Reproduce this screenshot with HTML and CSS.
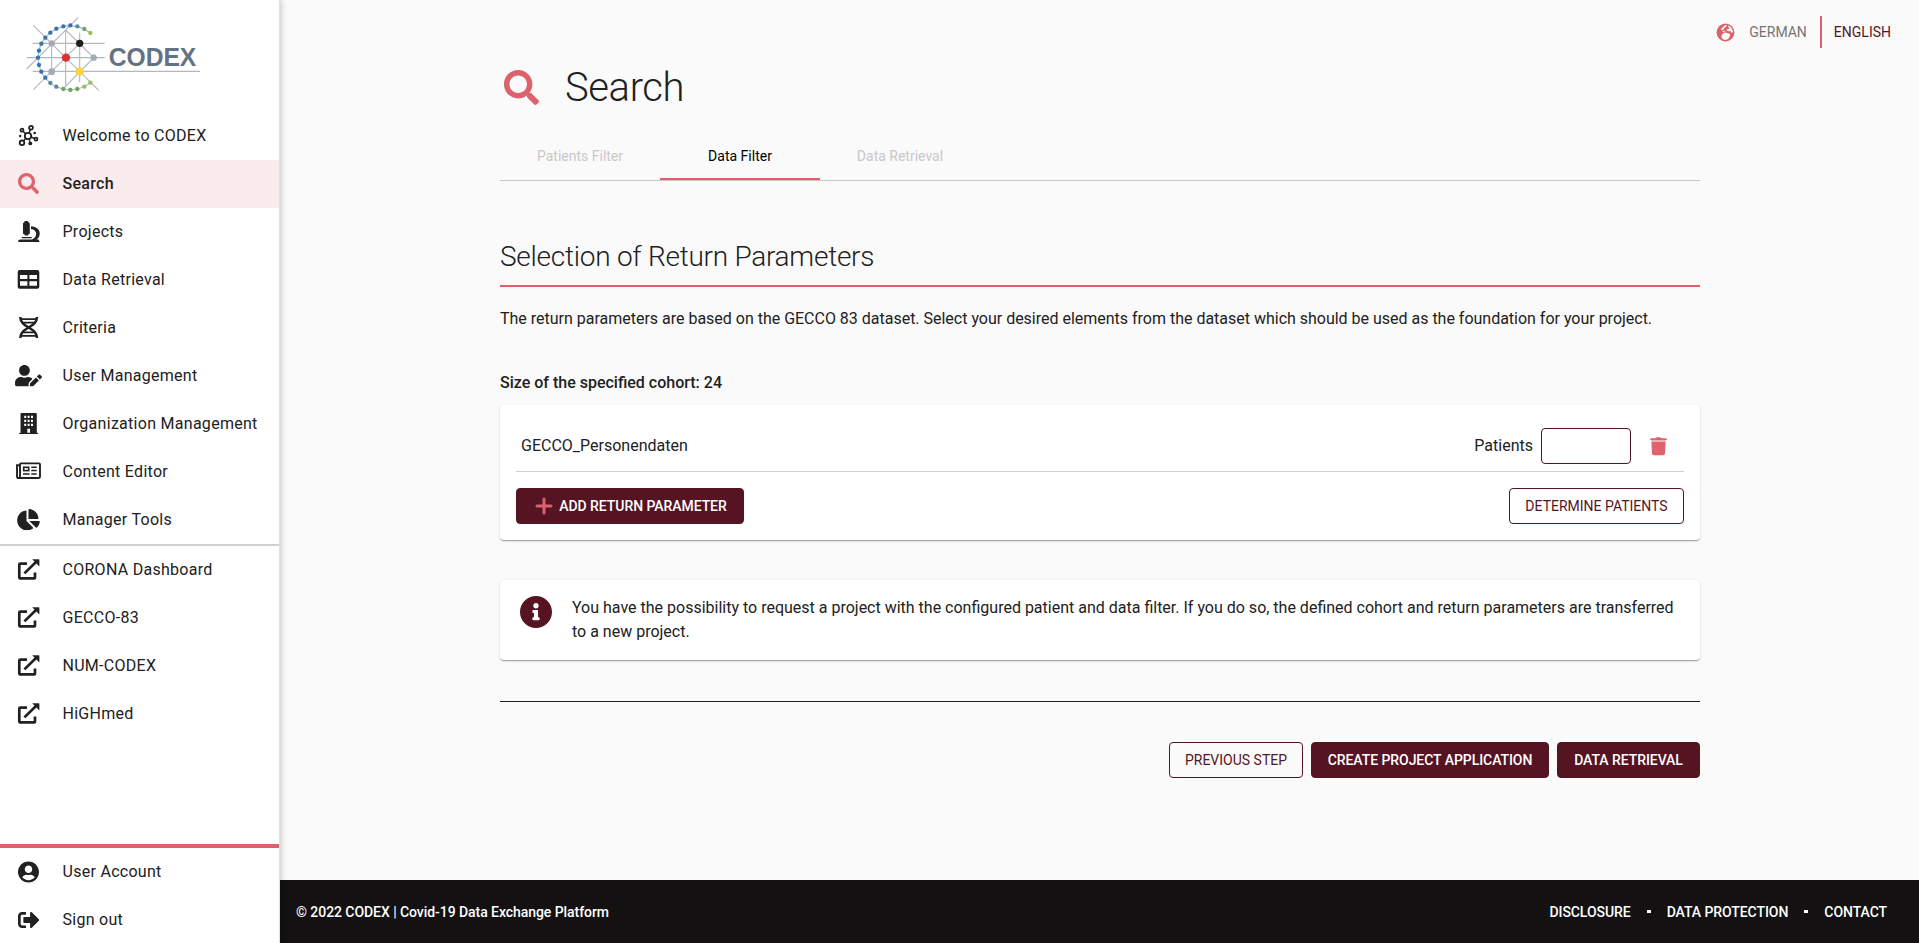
FILE: index.html
```html
<!DOCTYPE html>
<html lang="en">
<head>
<meta charset="utf-8">
<title>CODEX – Search</title>
<link rel="stylesheet" href="styles.css">
</head>
<body>
<svg class="symbols" aria-hidden="true">
  <symbol id="search" viewBox="0 0 512 512"><path d="M505 442.7L405.3 343c-4.5-4.5-10.6-7-17-7H372c27.6-35.3 44-79.7 44-128C416 93.1 322.9 0 208 0S0 93.1 0 208s93.1 208 208 208c48.3 0 92.7-16.4 128-44v16.3c0 6.4 2.5 12.5 7 17l99.7 99.7c9.4 9.4 24.6 9.4 33.9 0l28.3-28.3c9.4-9.4 9.4-24.6.1-34zM208 336c-70.7 0-128-57.2-128-128 0-70.7 57.2-128 128-128 70.7 0 128 57.2 128 128 0 70.7-57.2 128-128 128z"/></symbol>
  <symbol id="external" viewBox="0 0 28 24"><path d="M13 5.6H6.2Q5.3 5.6 5.3 6.5V19.4Q5.3 20.4 6.2 20.4H20.1Q21 20.4 21 19.4V14.6M10.4 15.4L22 4" fill="none" stroke="currentColor" stroke-width="2.7"/><path d="M18.2 1.2h6.4q.8 0 .8.8v6.4z"/></symbol>
</svg>
<div class="app">
  <aside class="sidebar">
    <svg class="logo" viewBox="0 0 840 336">
      <g stroke="#b3b8bf" stroke-width="3.4" fill="none">
        <path d="M100 76L296 271M235 52L80 207M98 130H314M80 173H314M98 214H600M155 130V214M197 90V262M239 98V246M239 130L100 269M155 214L239 130M239 130L281 173L190 266M197 90L281 173"/>
        <path d="M271 99A96 96 0 1 0 271 248" stroke="#9fbfd0"/>
      </g>
      <g fill="#3873ae"><circle cx="211" cy="76" r="6.5"/><circle cx="190" cy="79" r="6.5"/><circle cx="169" cy="86" r="6.5"/><circle cx="151" cy="98" r="6.5"/><circle cx="136" cy="113" r="6.5"/><circle cx="124" cy="131" r="6.5"/><circle cx="117" cy="152" r="6.5"/><circle cx="114" cy="173" r="6.5"/><circle cx="117" cy="195" r="6.5"/><circle cx="124" cy="215" r="6.5"/><circle cx="136" cy="233" r="6.5"/></g>
      <g fill="#598b99"><circle cx="232" cy="79" r="6.5"/><circle cx="151" cy="249" r="6.5"/><circle cx="169" cy="260" r="6.5"/></g>
      <g fill="#76a15e"><circle cx="253" cy="87" r="6.5"/><circle cx="190" cy="267" r="6.5"/><circle cx="211" cy="270" r="6.5"/><circle cx="232" cy="267" r="6.5"/></g>
      <g fill="#9cbf51"><circle cx="271" cy="99" r="6.5"/><circle cx="253" cy="260" r="6.5"/><circle cx="271" cy="248" r="6.5"/></g>
      <g fill="#a2acb6"><circle cx="155" cy="130" r="9.5"/><circle cx="281" cy="173" r="9.5"/><circle cx="155" cy="215" r="10"/></g>
      <circle cx="239" cy="130" r="11" fill="#1d1d1b"/><circle cx="198" cy="173" r="12.5" fill="#d9342f"/><circle cx="239" cy="215" r="12.5" fill="#fbd43b"/>
      <text class="logo-text" x="326" y="198" textLength="263" lengthAdjust="spacingAndGlyphs">CODEX</text>
    </svg>
    <nav class="nav">
      <a class="item"><svg class="icon" viewBox="0 0 28 24"><g fill="none" stroke="currentColor" stroke-width="1.8"><circle cx="14" cy="12" r="3.2"/><circle cx="8" cy="6.2" r="1.5"/><circle cx="17" cy="3.8" r="1.9"/><circle cx="22" cy="15.2" r="1.5"/><circle cx="8" cy="18.8" r="2.3"/><path d="M9 7.2l2.7 2.6M16.3 5.6l-1.2 3.3M17 13l3.6 1.5M11.6 14.3l-2 2.7M15.1 15.1l.8 2.5" stroke-width="1.4"/></g><circle cx="20.7" cy="9" r="1.3"/><circle cx="16.3" cy="19.4" r="1.9"/><circle cx="6.2" cy="12" r="1.2"/></svg>Welcome to CODEX</a>
      <a class="item active"><svg class="icon"><use href="#search" x="4" y="1" width="21" height="21"/></svg>Search</a>
      <a class="item"><svg class="icon" viewBox="0 0 28 24"><path d="M10.2 2.4Q10.2 1 11.5 1h1.7q1.3 0 1.3 1.4 1.3 0 1.3 1.3v9.2q0 1.3-1.3 1.3l-.6 1.3h-3l-.6-1.3q-1.3 0-1.3-1.3V3.7q0-1.3 1.2-1.3zM7.700 17h10v1.300h-10zM17 6.200c10.500.6 10.600 10.500 5.500 13.200h2q.9 1.300.9 2.600H4q0-2.600 2-2.600h12c6-1.900 5.500-10-1-10.300z"/></svg>Projects</a>
      <a class="item"><svg class="icon" viewBox="0 0 28 24"><path fill-rule="evenodd" d="M5.700 2h17.600q2 0 2 2v14.700q0 2-2 2H5.700q-2 0-2-2V4q0-2 2-2zM6 7v4h7.400V7zM15.400 7v4h7.600V7zM6 13.200v4.600h7.400v-4.600zM15.400 13.200v4.600h7.600v-4.600z"/></svg>Data Retrieval</a>
      <a class="item"><svg class="icon" viewBox="0 0 28 24"><g fill="none" stroke="currentColor"><path d="M6.300 1c0 11 16.700 10 16.700 21M23 1c0 11-16.700 10-16.700 21" stroke-width="2.500"/><path d="M7 3.200h15M9 6.600h11M9 16.400h11M7 19.800h15" stroke-width="1.700"/></g></svg>Criteria</a>
      <a class="item"><svg class="icon"><svg x="1" y="1" width="27" height="21.500" viewBox="0 0 640 512"><path d="M224 256c70.700 0 128-57.300 128-128S294.700 0 224 0 96 57.300 96 128s57.300 128 128 128zm89.600 32h-16.700c-22.200 10.200-46.900 16-72.900 16s-50.600-5.800-72.900-16h-16.700C60.200 288 0 348.200 0 422.400V464c0 26.500 21.500 48 48 48h274.900c-2.400-6.800-3.400-14-2.600-21.300l6.800-60.900 1.200-11.100 7.900-7.900 77.300-77.300c-24.500-27.700-60-45.500-99.900-45.500zm45.300 145.300l-6.800 61c-1.100 10.200 7.500 18.800 17.600 17.600l60.900-6.800 137.900-137.900-71.700-71.700-137.900 137.800zM633 268.900L595.100 231c-9.300-9.300-24.500-9.300-33.800 0l-37.800 37.800-4.100 4.100 71.800 71.700 41.800-41.800c9.300-9.400 9.300-24.500 0-33.900z"/></svg></svg>User Management</a>
      <a class="item"><svg class="icon" viewBox="0 0 28 24"><path fill-rule="evenodd" d="M7.500 1h14.300q1 0 1 1v18.800q1.500 0 1.500 1.200H5q0-1.200 1.500-1.200V2q0-1 1-1zM10.200 3.700v2.200h2V3.700zM13.600 3.700v2.200h2V3.700zM17 3.700v2.200h2V3.700zM10.200 7.700v2.200h2V7.700zM13.600 7.700v2.200h2V7.700zM17 7.700v2.200h2V7.700zM10.200 11.700v2.200h2v-2.200zM13.600 11.700v2.200h2v-2.200zM17 11.700v2.200h2v-2.200zM13.300 16.800v4h2.700v-4z"/></svg>Organization Management</a>
      <a class="item"><svg class="icon" viewBox="0 0 28 24"><g fill="none" stroke="currentColor" stroke-width="1.900"><path d="M6 4.400q0-1 1-1h18q1 0 1 1v12.400q0 1.200-1.200 1.200H4.600Q3 18 3 16.400V5.200h2.500M6 4v12.500Q6 18 4.500 18"/><rect x="9.700" y="7.300" width="5" height="3.300" stroke-width="1.600"/><path d="M17.300 7.300h5.400M17.300 10.500h5.400M9 14h6.600M17.300 14h5.400" stroke-width="1.600"/></g></svg>Content Editor</a>
      <a class="item"><svg class="icon"><svg x="3" y="1" width="23" height="21.300" viewBox="0 0 544 512"><path d="M527.790 288H290.500l158.030 158.030c6.040 6.040 15.980 6.530 22.190.68 38.700-36.460 65.320-85.610 73.130-140.860 1.340-9.460-6.510-17.850-16.060-17.850zm-15.830-64.800C503.720 103.740 408.260 8.280 288.800.04 279.680-.59 272 7.100 272 16.240V240h223.770c9.140 0 16.820-7.680 16.190-16.800zM224 288V50.710c0-9.550-8.390-17.400-17.840-16.060C86.990 51.490-4.100 155.600.14 280.370 4.500 408.510 114.830 513.590 243.030 511.980c50.400-.63 96.970-16.870 135.260-44.030 7.900-5.600 8.420-17.230 1.570-24.080L224 288z"/></svg></svg>Manager Tools</a>
      <div class="rule"></div>
      <a class="item"><svg class="icon"><use href="#external"/></svg>CORONA Dashboard</a>
      <a class="item"><svg class="icon"><use href="#external"/></svg>GECCO-83</a>
      <a class="item"><svg class="icon"><use href="#external"/></svg>NUM-CODEX</a>
      <a class="item"><svg class="icon"><use href="#external"/></svg>HiGHmed</a>
    </nav>
    <nav class="nav account">
      <a class="item"><svg class="icon"><svg x="4" y="1" width="21" height="22" viewBox="0 0 496 512"><path d="M248 8C111 8 0 119 0 256s111 248 248 248 248-111 248-248S385 8 248 8zm0 96c48.600 0 88 39.400 88 88s-39.400 88-88 88-88-39.400-88-88 39.400-88 88-88zm0 344c-58.700 0-111.300-26.600-146.500-68.200 18.800-35.400 55.600-59.800 98.500-59.800 2.400 0 4.800.4 7.100 1.100 13 4.200 26.600 6.900 40.900 6.900 14.300 0 28-2.700 40.900-6.900 2.300-.7 4.700-1.100 7.100-1.100 42.900 0 79.700 24.400 98.500 59.800C359.300 421.400 306.700 448 248 448z"/></svg></svg>User Account</a>
      <a class="item"><svg class="icon"><svg x="4" y="1" width="21.500" height="22" viewBox="0 0 512 512"><path d="M497 273L329 441c-15 15-41 4.500-41-17v-96H152c-13.300 0-24-10.700-24-24v-96c0-13.300 10.700-24 24-24h136V88c0-21.400 25.900-32 41-17l168 168c9.300 9.400 9.300 24.600 0 34zM192 436v-40c0-6.600-5.400-12-12-12H96c-17.700 0-32-14.300-32-32V160c0-17.700 14.300-32 32-32h84c6.600 0 12-5.400 12-12V76c0-6.600-5.400-12-12-12H96c-53 0-96 43-96 96v192c0 53 43 96 96 96h84c6.600 0 12-5.400 12-12z"/></svg></svg>Sign out</a>
    </nav>
  </aside>
  <div class="page">
    <header class="languages">
      <svg class="globe" viewBox="0 0 20 20"><circle cx="10" cy="10" r="9.400"/><path class="land" d="M6 13l2.500-3 2.500.2 2 .8 1.800.2-.3 3-1.700 2.600-2.800 1-2.800-.7L5.800 15zM9.500 2.300l2-.3-.8 2-2 1-.4 1.700-2.300.8-.8-1 2-2zM12.800 2.500l2.700 1.800 1.800 2.800.6 3-1.700-.2-1.200-1.600-2 .4-2-1.200 1-1.300 1.700.2.5-1.400-1.600-1zM6.500 8.800l3-1 .5.8-2.500 1z"/></svg>
      <a class="lang">GERMAN</a><a class="lang current">ENGLISH</a>
    </header>
    <main class="content">
      <div class="title"><svg class="title-icon"><use href="#search"/></svg><h1>Search</h1></div>
      <div class="tabs"><a class="tab">Patients Filter</a><a class="tab selected">Data Filter</a><a class="tab">Data Retrieval</a></div>
      <h2>Selection of Return Parameters</h2>
      <p class="intro">The return parameters are based on the GECCO 83 dataset. Select your desired elements from the dataset which should be used as the foundation for your project.</p>
      <p class="cohort">Size of the specified cohort: 24</p>
      <section class="card parameters">
        <div class="parameter"><span class="name">GECCO_Personendaten</span><label for="patients">Patients</label><input id="patients" class="count"><svg class="trash" viewBox="0 0 18 19"><path d="M1.400 5h14.200L15 16.500q-.1 1.800-2 1.800H4q-1.900 0-2-1.800zM1 1.300h4.500L6.600.3h3.800l1.100 1H16q.8 0 .8.700v1H.2V2q0-.7.800-.7z"/><path d="M1.200 3h14.600l-.2 2H1.400z" opacity=".5"/></svg></div>
        <div class="actions"><button class="button filled add"><svg class="plus" viewBox="0 0 18 18"><path d="M9 2v14M2 9h14" stroke="currentColor" stroke-width="3" stroke-linecap="round"/></svg>ADD RETURN PARAMETER</button><button class="button determine">DETERMINE PATIENTS</button></div>
      </section>
      <section class="card info"><svg class="info-icon" viewBox="8 8 496 496"><path d="M256 8C119.043 8 8 119.083 8 256c0 136.997 111.043 248 248 248s248-111.003 248-248C504 119.083 392.957 8 256 8zm0 110c23.196 0 42 18.804 42 42s-18.804 42-42 42-42-18.804-42-42 18.804-42 42-42zm56 254c0 6.627-5.373 12-12 12h-88c-6.627 0-12-5.373-12-12v-24c0-6.627 5.373-12 12-12h12v-64h-12c-6.627 0-12-5.373-12-12v-24c0-6.627 5.373-12 12-12h64c6.627 0 12 5.373 12 12v100h12c6.627 0 12 5.373 12 12v24z"/></svg><p>You have the possibility to request a project with the configured patient and data filter. If you do so, the defined cohort and return parameters are transferred to a new project.</p></section>
      <div class="steps"><button class="button previous">PREVIOUS STEP</button><button class="button filled create">CREATE PROJECT APPLICATION</button><button class="button filled retrieval">DATA RETRIEVAL</button></div>
    </main>
    <footer class="footer"><span>© 2022 CODEX | Covid-19 Data Exchange Platform</span><div class="links"><a>DISCLOSURE</a><i class="dot"></i><a>DATA PROTECTION</a><i class="dot"></i><a>CONTACT</a></div></footer>
  </div>
</div>
</body>
</html>
```
FILE: styles.css
```css
* { box-sizing: border-box; }
body { margin: 0; overflow: hidden; background: #fafafa; color: #212121; font: 400 16px/24px Roboto, sans-serif; }
svg { fill: currentColor; flex: none; }
h1, h2, p { margin: 0; }
.symbols { position: absolute; width: 0; height: 0; }
.app { display: flex; height: 943px; }

.sidebar { position: relative; z-index: 1; display: flex; flex-direction: column; width: 280px; flex: none; background: #fff; border-right: 1px solid #e0e0e0; box-shadow: 1px 0 6px rgba(0, 0, 0, .22); }
.logo { display: block; width: 280px; height: 112px; }
.logo-text { fill: #647382; font: 700 76px "Liberation Sans", sans-serif; }
.nav { display: flex; flex-direction: column; }
.item { display: flex; align-items: center; gap: 20.5px; height: 48px; padding-left: 14px; letter-spacing: .28px; white-space: nowrap; }
.item.active { background: #faebec; font-weight: 500; }
.active .icon { color: #e0626d; }
.icon { width: 28px; height: 24px; }
.rule { height: 2px; background: #d0d0d0; }
.account { margin-top: auto; margin-bottom: -1px; border-top: 4px solid #db626c; }

.page { display: flex; flex-direction: column; flex: 1; min-width: 0; }
.languages { display: flex; justify-content: flex-end; align-items: center; height: 64px; padding-right: 28px; font-size: 14px; }
.globe { width: 19px; height: 19px; margin-right: 14px; color: #db626c; }
.land { fill: #fafafa; }
.lang { color: #757575; }
.lang.current { display: flex; align-items: center; height: 32px; margin-left: 13px; padding-left: 12px; border-left: 2px solid #db626c; color: #561423; }

.content { display: flex; flex-direction: column; width: 1200px; margin-left: 220px; flex: 1; }
.title { display: flex; align-items: center; height: 48px; padding-left: 4px; gap: 26px; }
.title-icon { width: 35px; height: 35px; margin-bottom: 2px; color: #db626c; }
h1 { font-size: 40px; line-height: 48px; font-weight: 300; letter-spacing: -.4px; }
.tabs { display: flex; height: 49px; margin-top: 20px; border-bottom: 1px solid #c8c8c8; }
.tab { display: flex; justify-content: center; width: 160px; padding-top: 12px; color: #c8c8c8; font-size: 14px; border-bottom: 2px solid transparent; }
.tab.selected { color: #000; border-bottom-color: #db626c; }
h2 { height: 50px; margin-top: 56px; font-size: 28px; line-height: 40px; font-weight: 300; letter-spacing: -.26px; border-bottom: 2px solid #db626c; }
.intro { margin-top: 20px; letter-spacing: -.01px; white-space: nowrap; }
.cohort { margin-top: 40px; font-weight: 500; }
.card { background: #fff; border-radius: 4px; box-shadow: 0 2px 1px -1px rgba(0, 0, 0, .2), 0 1px 1px rgba(0, 0, 0, .14), 0 1px 3px rgba(0, 0, 0, .12); }
.parameters { height: 135px; margin-top: 10px; padding: 16px; }
.parameter { display: flex; align-items: center; height: 51px; padding: 0 16px 0 5px; border-bottom: 1px solid #cfcfcf; }
.name { margin-right: auto; }
.count { width: 90px; height: 36px; margin: 0 19px 0 8px; border: 1px solid #561423; border-radius: 4px; background: #fff; outline: 0; }
.trash { width: 18px; height: 19px; color: #df626d; }
.actions { display: flex; justify-content: space-between; margin-top: 16px; }
.button { display: flex; align-items: center; justify-content: center; height: 36px; padding: 0; border: 1px solid #561423; border-radius: 4px; background: transparent; color: #561423; font: 400 14px Roboto, sans-serif; white-space: nowrap; }
.button.filled { background: #561423; color: #fff; font-weight: 500; letter-spacing: -.06px; }
.add { width: 228px; gap: 6px; padding-left: 2px; }
.plus { width: 18px; height: 18px; color: #db626c; }
.determine { width: 175px; }
.info { display: flex; gap: 20px; height: 80px; margin-top: 40px; padding: 16px 20px; }
.info-icon { width: 32px; height: 32px; color: #561423; }
.steps { display: flex; justify-content: flex-end; gap: 8px; margin-top: 41px; padding-top: 40px; border-top: 1px solid #212121; }
.previous { width: 134px; }
.create { width: 238px; }
.retrieval { width: 143px; }

.footer { display: flex; align-items: center; justify-content: space-between; height: 63px; padding: 0 32px 0 16px; background: #131112; color: #fff; font-size: 14px; font-weight: 500; letter-spacing: -.06px; }
.links { display: flex; align-items: center; gap: 16px; }
.dot { width: 4px; height: 3px; background: #fff; }
```
